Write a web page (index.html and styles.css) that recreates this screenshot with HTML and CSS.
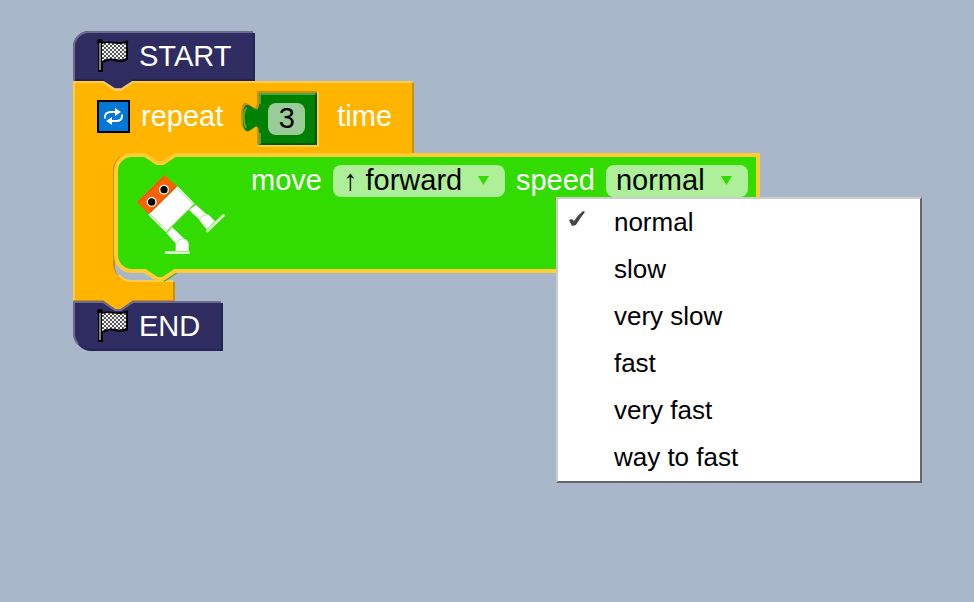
FILE: index.html
```html
<!DOCTYPE html>
<html lang="en">
<head>
<meta charset="utf-8">
<title>Block editor</title>
<link rel="stylesheet" href="styles.css">
</head>
<body>
<svg class="defs" aria-hidden="true">
  <defs>
    <pattern id="checks" width="4" height="4" patternUnits="userSpaceOnUse">
      <rect width="4" height="4" fill="#f4f4f4"/>
      <path d="M0 0h2v2h-2zM2 2h2v2h-2z" fill="#555"/>
    </pattern>
    <symbol id="flag" viewBox="0 0 34 34">
      <circle cx="4" cy="3" r="3" fill="#000"/>
      <path d="M2 3H6V4C12 0 20 6 31 1.500Q33 1 32 4V21C22 26 18 20 12 22Q9 23 7 24V33H2Z" fill="#000"/>
      <path d="M6 5C13 2 20 7 30 4V19C22 23 18 18 12 20Q9 20 6 22Z" fill="url(#checks)"/>
      <path d="M4 4V31" stroke="#aaa" stroke-width="1.500"/>
    </symbol>
  </defs>
</svg>
<main class="workspace">
  <div class="stack">
    <section class="block cap start">
      <svg class="shape" width="182" height="60" viewBox="0 0 182 60" aria-hidden="true">
        <path class="navy-dark" d="M2 50V18A16 16 0 0 1 18 2H182V50H59L48 57H42L31 50Z"/>
        <path class="navy" d="M0 48V16A16 16 0 0 1 16 0H180V48H60L48 57H42L30 48Z"/>
        <path class="navy-light" d="M1 50V16A15 15 0 0 1 16 1H180"/>
      </svg>
      <svg class="icon" aria-hidden="true"><use href="#flag"/></svg>
      <span>START</span>
    </section>

    <section class="block repeat">
      <svg class="shape" width="341" height="232" viewBox="0 0 341 232" aria-hidden="true">
        <path class="orange-dark" d="M2 2H30L42 10H48L60 2H341V74H102L90 82H84L72 74H58A16 16 0 0 0 42 90V183A16 16 0 0 0 58 201H102V221H60L48 229H42L30 221H1Z"/>
        <path class="orange" d="M0 0H30L42 8H48L60 0H339V73H102L90 81H84L72 73H56A16 16 0 0 0 40 89V183A16 16 0 0 0 56 199H100V219H60L48 228H42L30 219H0Z"/>
        <path class="orange-light" d="M1 219V1H30L42 9H48L60 1H339M46 194A16 16 0 0 0 57 200H100"/>
      </svg>
      <div class="head">
        <svg class="icon" viewBox="0 0 34 34" aria-hidden="true">
          <rect x="2" y="2" width="31" height="31" fill="#0078d7" stroke="#000" stroke-width="2"/>
          <path d="M9 19.500V18Q9 13 15 13H20M26 15.500V17Q26 22 20 22H15" fill="none" stroke="#fff" stroke-width="2"/>
          <path d="M19 9L25 13L19 17ZM16 18L10 22L16 26Z" fill="#fff"/>
        </svg>
        <label for="count">repeat</label>
        <div class="number">
          <svg class="shape" width="78" height="58" viewBox="0 0 78 58" aria-hidden="true">
            <path class="orange-dark" d="M15 1H77V57H15V41C15 21 -1 57 -1 26S15 31 15 11Z"/>
            <path class="orange-light" d="M15 56H76V1"/>
            <path fill="#008000" d="M17 3H75V55H17V43C17 23 1 59 1 28S17 33 17 13Z"/>
            <path fill="none" stroke="#4da64d" stroke-width="2" d="M73 4H18V14M18 43V54M4 38C1 32 1 20 5 18"/>
            <path fill="none" stroke="#005a00" stroke-width="2" d="M74 5V54H19"/>
          </svg>
          <input id="count" class="field" type="text" value="3">
        </div>
        <span>time</span>
      </div>

      <div class="body">
        <div class="block move">
          <svg class="shape" width="647" height="130" viewBox="0 0 647 130" aria-hidden="true">
            <path fill="#28af00" d="M46 121L51 129L66 119Z"/>
            <path fill="#32db00" stroke="#fc3" stroke-width="4" d="M3 18A16 16 0 0 1 19 2H32L44 10H50L62 2H645V118H62L50 126H44L32 118H19A16 16 0 0 1 3 102Z"/>
          </svg>
          <svg class="robot" viewBox="90 84 270 246" role="img" aria-label="Walking robot">
            <path fill="#ff6200" d="M175 87L214 122L130 206L93 168Z"/>
            <path fill="none" stroke="#c94a00" stroke-width="2" d="M98 168L175 93M132 198L207 123"/>
            <g fill="#000" stroke="#fff" stroke-width="4"><circle cx="174" cy="131" r="13"/><circle cx="137" cy="168" r="13"/></g>
            <g fill="#fff">
              <path d="M215 121L266 173L180 259L127 207Z"/>
              <path d="M198 243L235 278L213 296L181 261Z"/>
              <path d="M270 176L304 207L284 224L249 192Z"/>
              <path d="M209 318V291Q212 278 228 278Q247 278 248 294V318Z"/>
              <path d="M281 224Q279 208 300 205L308 206L327 226L303 251Z"/>
            </g>
            <g fill="none" stroke="#d6f8cc" stroke-linecap="round" stroke-width="8"><path d="M180 320H248M304 255L353 208"/></g>
            <g fill="none" stroke="#6de34a" stroke-width="2"><path d="M134 206L183 253M213 128L261 174M181 257L264 174M187 259L199 247M209 292Q218 277 234 279M281 222Q286 205 304 207M211 316H247M303 249L326 227"/></g>
          </svg>
          <div class="fields">
            <label for="direction">move</label>
            <span class="picker direction"><select id="direction" class="field"><option>↑ forward</option></select></span>
            <label for="speed">speed</label>
            <span class="picker speed">
              <select id="speed" class="field"><option>normal</option><option>slow</option><option>very slow</option><option>fast</option><option>very fast</option><option>way to fast</option></select>
              <span class="menu" role="menu">
                <button type="button" role="menuitemradio" aria-checked="true"><svg class="check" viewBox="0 0 16 18" aria-hidden="true"><path d="M0 10L3 9L5 11Q9 5 14 1L16 2Q11 8 7 15L3 16Z" fill="#444"/></svg>normal</button>
                <button type="button" role="menuitemradio" aria-checked="false">slow</button>
                <button type="button" role="menuitemradio" aria-checked="false">very slow</button>
                <button type="button" role="menuitemradio" aria-checked="false">fast</button>
                <button type="button" role="menuitemradio" aria-checked="false">very fast</button>
                <button type="button" role="menuitemradio" aria-checked="false">way to fast</button>
              </span>
            </span>
          </div>
        </div>
      </div>
    </section>

    <section class="block cap end">
      <svg class="shape" width="151" height="50" viewBox="0 0 151 50" aria-hidden="true">
        <path class="navy-dark" d="M2 2H30L42 10H48L60 2H150V50H18A16 16 0 0 1 2 34Z"/>
        <path class="navy" d="M0 0H30L42 8H48L60 0H148V48H18A18 18 0 0 1 0 32Z"/>
        <path class="navy-light" d="M5 43A16 16 0 0 1 1 32V1H30L42 9H48L60 1H148"/>
      </svg>
      <svg class="icon" aria-hidden="true"><use href="#flag"/></svg>
      <span>END</span>
    </section>
  </div>
</main>
</body>
</html>
```

FILE: styles.css
```css
* { box-sizing: border-box; }
body { margin: 0; background: #a8b8ca; }
.defs { position: absolute; width: 0; height: 0; }

.workspace {
  min-height: 100vh;
  padding: 31px 0 0 73px;
  color: #fff;
  font: 29px/32px "Liberation Sans", Arial, sans-serif;
}
.stack, .repeat { display: flex; flex-direction: column; align-items: flex-start; }

/* Blocks: the outline is an SVG behind the flowing content */
.block, .number { position: relative; isolation: isolate; }
.shape { position: absolute; top: 0; left: 0; z-index: -1; overflow: visible; }
.navy { fill: #2e2c61; }
.navy-dark { fill: #252350; }
.navy-light { fill: none; stroke: #6d6b90; stroke-width: 2; }
.orange { fill: #ffb400; }
.orange-dark { fill: #cc9000; }
.orange-light { fill: none; stroke: #ffcb4d; stroke-width: 2; }

.cap, .head { display: flex; align-items: center; padding-left: 23px; }
.cap { height: 50px; gap: 9px; }
.start { width: 182px; }
.end { width: 151px; }
.icon { width: 34px; height: 34px; flex: none; }

.repeat { padding-bottom: 28px; }
.head { height: 72px; gap: 11px; padding-bottom: 2px; }
.number { width: 78px; height: 58px; padding: 13px 0 0 26px; margin: 6px 6px 0 8px; }

.field {
  display: block;
  height: 32px;
  margin: 0;
  padding: 0 0 2px 10px;
  border: 0;
  border-radius: 8px;
  outline: 0;
  appearance: none;
  background: #adf099;
  color: #000;
  font: inherit;
  line-height: 30px;
}
.number .field { width: 37px; padding: 0 0 2px; text-align: center; background: #99cc99; }

.body { padding-left: 40px; }
.move { display: flex; align-items: flex-start; width: 647px; height: 120px; padding: 12px 12px 0 23px; }
.robot { width: 90px; height: 82px; flex: none; margin: 9px 25px 0 0; }
.fields { display: flex; gap: 11px; line-height: 30px; }

.picker { position: relative; }
.picker::after {
  content: "";
  position: absolute;
  top: 11px;
  right: 16px;
  width: 11px;
  height: 9px;
  background: #32db00;
  clip-path: polygon(0 0, 100% 0, 50% 100%);
  pointer-events: none;
}
.direction .field { width: 172px; }
.speed .field { width: 142px; }

.menu {
  position: absolute;
  top: 32px;
  right: -174px;
  z-index: 2;
  display: flex;
  flex-direction: column;
  width: 366px;
  border: 2px solid;
  border-color: #ccc #666 #666 #ccc;
  background: #fff;
}
.menu button {
  position: relative;
  height: 47px;
  padding: 0 0 2px 56px;
  border: 0;
  background: none;
  color: #000;
  font: 26px/44px "Liberation Sans", Arial, sans-serif;
  text-align: left;
}
.check { position: absolute; top: 11px; left: 11px; width: 16px; height: 18px; }

/* The connector under the first block plugs into the next one */
.start { z-index: 1; }
```
